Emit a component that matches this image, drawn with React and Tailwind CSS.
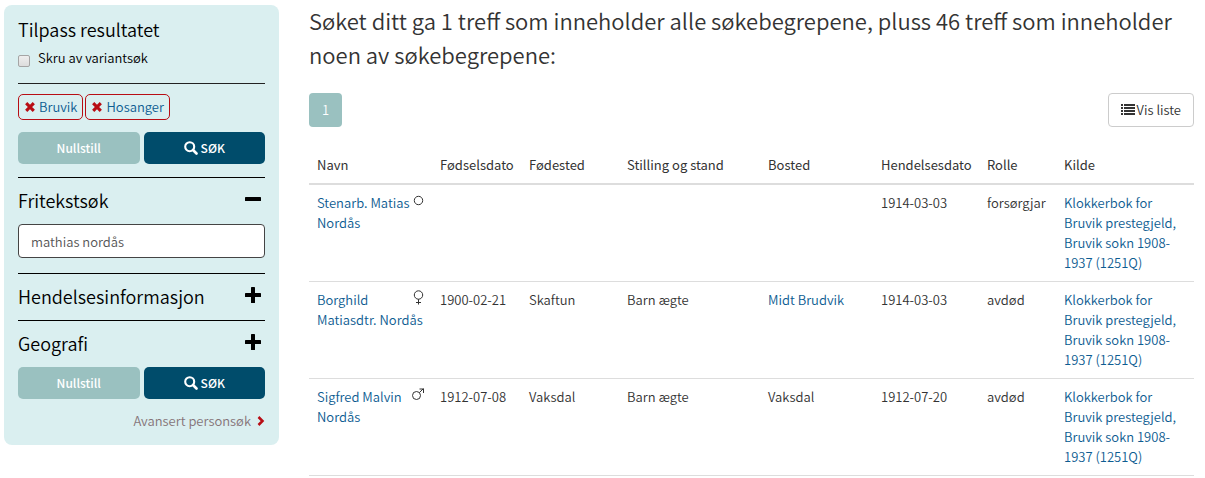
import React, { useState } from "react";

const rows = [
  {
    name: "Stenarb. Matias Nordås",
    gender: "unknown",
    born: "",
    birthPlace: "",
    position: "",
    residence: "",
    eventDate: "1914-03-03",
    role: "forsørgjar",
    source: "Klokkerbok for Bruvik prestegjeld, Bruvik sokn 1908-1937 (1251Q)",
  },
  {
    name: "Borghild Matiasdtr. Nordås",
    gender: "female",
    born: "1900-02-21",
    birthPlace: "Skaftun",
    position: "Barn ægte",
    residence: "Midt Brudvik",
    residenceLink: true,
    eventDate: "1914-03-03",
    role: "avdød",
    source: "Klokkerbok for Bruvik prestegjeld, Bruvik sokn 1908-1937 (1251Q)",
  },
  {
    name: "Sigfred Malvin Nordås",
    gender: "male",
    born: "1912-07-08",
    birthPlace: "Vaksdal",
    position: "Barn ægte",
    residence: "Vaksdal",
    eventDate: "1912-07-20",
    role: "avdød",
    source: "Klokkerbok for Bruvik prestegjeld, Bruvik sokn 1908-1937 (1251Q)",
  },
];

function RemoveIcon() {
  return (
    <svg viewBox="0 0 10 10" className="size-[10px] shrink-0" aria-hidden="true">
      <path d="M1.2 1.2 8.8 8.8M8.8 1.2 1.2 8.8" stroke="#b80d14" strokeWidth="3.1" />
    </svg>
  );
}

function SearchIcon() {
  return (
    <svg viewBox="0 0 14 14" className="size-[14px] shrink-0" fill="none" stroke="currentColor" aria-hidden="true">
      <circle cx="5.7" cy="5.7" r="4.5" strokeWidth="2.1" />
      <path d="m9 9 3.5 3.5" strokeWidth="2.6" strokeLinecap="round" />
    </svg>
  );
}

function ListIcon() {
  return (
    <svg viewBox="0 0 14 12" className="h-3 w-[14px] shrink-0" fill="currentColor" aria-hidden="true">
      <path d="M0 0h2v2H0zM0 3h2v2H0zM0 6h2v2H0zM0 9h2v2H0zM3 0h11v2H3zM3 3h11v2H3zM3 6h11v2H3zM3 9h11v2H3z" />
    </svg>
  );
}

function GenderIcon({ gender }) {
  return (
    <svg viewBox="0 0 12 16" className="h-4 w-3 overflow-visible" fill="none" stroke="#333" role="img" aria-label={gender}>
      {gender === "male" ? (
        <>
          <circle cx="4.5" cy="8.5" r="4" />
          <path d="M7.4 5.6 11.5 1.5M7.5 2h4v4" />
        </>
      ) : (
        <circle cx="6.5" cy={gender === "female" ? 5 : 7.5} r="4.2" />
      )}
      {gender === "female" && <path d="M6.5 9.2V14.5M4 12.5h5" />}
    </svg>
  );
}

function Tag({ children }) {
  return (
    <button type="button" className="flex h-[26px] items-center gap-1 rounded-[5px] border border-[#b80d14] pr-[5px] pl-[6px] text-[#0d5c91]">
      <RemoveIcon />
      {children}
    </button>
  );
}

function FormButtons() {
  return (
    <div className="grid grid-cols-2 gap-1 text-xs font-medium text-white">
      <button type="button" className="h-8 rounded-[5px] bg-[#9ac1c0]">
        Nullstill
      </button>
      <button type="submit" className="flex h-8 items-center justify-center gap-[3px] rounded-[5px] bg-[#004c6b]">
        <SearchIcon />
        SØK
      </button>
    </div>
  );
}

function SectionToggle({ title, open, onClick }) {
  return (
    <button
      type="button"
      onClick={onClick}
      aria-expanded={open}
      className="flex h-[46px] w-full items-center justify-between pr-1 pb-[2px] text-left text-lg text-black"
    >
      {title}
      <svg viewBox="0 0 16 16" className="mb-[2px] size-4" fill="currentColor" aria-hidden="true">
        <rect x="0" y="6" width="16" height="4" rx="0.6" />
        {!open && <rect x="6" y="0" width="4" height="16" rx="0.6" />}
      </svg>
    </button>
  );
}

export default function App() {
  const [freeTextOpen, setFreeTextOpen] = useState(true);
  const [query, setQuery] = useState("mathias nordås");

  return (
    <div className="flex items-start gap-[30px] bg-white pt-[3px] pr-[11px] pl-1 font-['Noto_Sans_CJK_JP','Noto_Sans',sans-serif] text-[13px] leading-5 font-[350] text-[#333]">
      <form
        onSubmit={(e) => e.preventDefault()}
        className="mt-[2px] w-[275px] shrink-0 rounded-lg bg-[#daeff0] px-[14px] pt-3 pb-[14px]"
      >
        <h2 className="text-lg leading-6 font-[350] text-black">Tilpass resultatet</h2>
        <label className="mt-[7px] flex items-end gap-2 text-black">
          <input
            type="checkbox"
            className="mb-[1px] size-3 appearance-none rounded-[2px] border border-[#a5a5a5] bg-linear-to-b from-[#eee] to-[#ddd] checked:bg-[#004c6b]"
          />
          Skru av variantsøk
        </label>
        <div className="mt-[15px] flex gap-[2px] border-t border-[#222] pt-[10px] pb-3">
          <Tag>Bruvik</Tag>
          <Tag>Hosanger</Tag>
        </div>
        <FormButtons />

        <section className="mt-[13px] border-t border-black">
          <SectionToggle title="Fritekstsøk" open={freeTextOpen} onClick={() => setFreeTextOpen(!freeTextOpen)} />
          {freeTextOpen && (
            <input
              type="text"
              aria-label="Fritekstsøk"
              value={query}
              onChange={(e) => setQuery(e.target.value)}
              className="mb-[15px] block h-[34px] w-full rounded-sm border border-[#444] bg-white px-3 text-[#555]"
            />
          )}
        </section>
        <section className="border-t border-black">
          <SectionToggle title="Hendelsesinformasjon" open={false} />
        </section>
        <section className="border-t border-black">
          <SectionToggle title="Geografi" open={false} />
        </section>
        <FormButtons />
        <div className="mt-3 flex justify-end">
          <a href="#" className="flex items-center gap-[6px] text-[#857478]">
            Avansert personsøk
            <svg viewBox="0 0 8 10" className="h-[10px] w-2" fill="none" aria-hidden="true">
              <path d="m1.5 1 4 4-4 4" stroke="#b80d14" strokeWidth="2.5" />
            </svg>
          </a>
        </div>
      </form>

      <main className="min-w-0 flex-1">
        <h1 className="text-[22px] leading-[34px] font-[350]">
          Søket ditt ga 1 treff som inneholder alle søkebegrepene, pluss 46 treff som inneholder noen av søkebegrepene:
        </h1>
        <div className="mt-[22px] mb-5 flex items-center justify-between">
          <a href="#" aria-current="page" className="flex h-[34px] items-center rounded-sm bg-[#9ac1c0] px-[13px] text-white">
            1
          </a>
          <button type="button" className="flex h-[34px] items-center gap-[2px] rounded-sm border border-[#ccc] bg-white px-3">
            <ListIcon />
            Vis liste
          </button>
        </div>

        <table className="w-full table-fixed text-left">
          <thead>
            <tr className="border-b-2 border-[#ddd] *:p-2 *:font-normal *:whitespace-nowrap">
              <th className="w-[123px]">Navn</th>
              <th className="w-[89px]">Fødselsdato</th>
              <th className="w-[98px]">Fødested</th>
              <th className="w-[141px]">Stilling og stand</th>
              <th className="w-[113px]">Bosted</th>
              <th className="w-[106px]">Hendelsesdato</th>
              <th className="w-[77px]">Rolle</th>
              <th className="w-[138px]">Kilde</th>
            </tr>
          </thead>
          <tbody>
            {rows.map((row) => (
              <tr key={row.name} className="border-b border-[#ddd] align-top *:p-2">
                <td>
                  <div className="float-right">
                    <GenderIcon gender={row.gender} />
                  </div>
                  <a href="#" className="text-[#0d5c91]">
                    {row.name}
                  </a>
                </td>
                <td className="whitespace-nowrap">{row.born}</td>
                <td>{row.birthPlace}</td>
                <td>{row.position}</td>
                <td>
                  {row.residenceLink ? (
                    <a href="#" className="text-[#0d5c91]">
                      {row.residence}
                    </a>
                  ) : (
                    row.residence
                  )}
                </td>
                <td className="whitespace-nowrap">{row.eventDate}</td>
                <td>{row.role}</td>
                <td>
                  <a href="#" className="text-[#0d5c91]">
                    {row.source}
                  </a>
                </td>
              </tr>
            ))}
          </tbody>
        </table>
      </main>
    </div>
  );
}
